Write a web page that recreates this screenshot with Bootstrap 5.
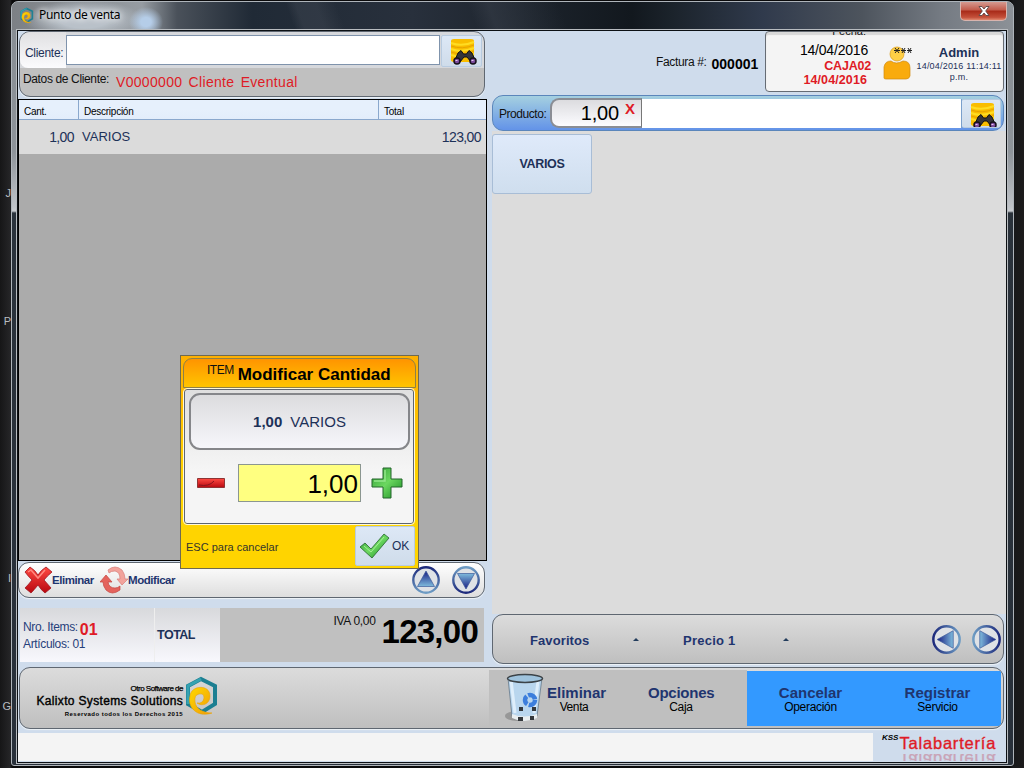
<!DOCTYPE html>
<html lang="es">
<head>
<meta charset="utf-8">
<meta name="viewport" content="width=device-width, initial-scale=1">
<title>Punto de venta</title>
<link href="https://cdn.jsdelivr.net/npm/bootstrap@5.3.0/dist/css/bootstrap.min.css" rel="stylesheet">
<style>
body{width:1024px;height:768px;overflow:hidden;background:linear-gradient(90deg,#161617,#252527 10px,#0a0a0b 12px 1010px,#17181a 1013px,#1c1b1b);font-family:"Liberation Sans",Arial,sans-serif;font-size:12px;line-height:14px;color:#111}
svg{display:block;flex:none}
.desk{width:11px;overflow:hidden;font-size:11px;color:#b9bcc0}
.desk span{display:block;height:14px;text-align:right}
.win{width:1003px;height:765px;margin-top:1px;border:1px solid #aeb4ba;border-radius:7px 7px 3px 3px;background:linear-gradient(180deg,#868c92 0,#8e949a 150px,#bfc3c8 205px,#c9ccd0 209px,#2a323b 211px,#28303a 100%);padding:0 5px}
.titlebar{height:28px;margin:0 -5px;border-radius:6px 6px 0 0;padding-left:8px;background:
 radial-gradient(ellipse 17px 15px at 134px 20px,#b5cde8 30%,#b5cde800),
 radial-gradient(ellipse 60px 20px at 72px 18px,#b9c1c9 40%,#b9c1c900),
 linear-gradient(70deg,#0000 0 28%,#4a515c55 29% 31%,#0000 33% 46%,#39404b88 48%,#0000 55% 80%,#0000),
 linear-gradient(90deg,#7c8085,#969ca2 130px,#4a515a 165px,#202a36 240px,#28303c 400px,#12181e 620px,#1b232b 660px,#303a4c 750px,#4d545d 850px,#757b83 930px,#8c9197)}
.titletxt{font-family:"Noto Sans","Open Sans",sans-serif;font-size:12px;letter-spacing:-.3px;color:#000;text-shadow:0 0 6px #fff,0 0 8px #fff}
.closer{width:47px;height:19px;margin-right:6px;border:1px solid #d8b4ae;border-top:0;border-radius:0 0 5px 5px;background:linear-gradient(#d59a90,#c25a4a 45%,#a82a18 50%,#c4503a 85%,#e08a70)}
.client{width:990px;height:733px;border:1px solid #0c1014;outline:1px solid #b8bcc0;background:#cfdcec}
.left{width:469px}
.right{width:514px;margin-left:5px}
.navy{color:#1d3158}
.blue{color:#1f356f}
.red{color:#df1b26}
.panel{border:1px solid #5f6771;border-radius:11px;background:linear-gradient(#dcdcdc,#bfbfbf);overflow:hidden;box-shadow:0 1px 1px #eef3f8}
.clipanel{height:66px;width:466px;margin:0 0 0 1px;background:linear-gradient(#d6d8dc 0 36px,#c0c0c0 36px)}
.clilabel{width:46px;height:36px;padding:14px 0 0 5px;background:linear-gradient(#e0e0e2,#fbfbfd);border-radius:8px 0 0 8px;letter-spacing:-.3px}
.field{background:#fff;border:1px solid #7f93ac}
.findbtn{background:linear-gradient(#dde8f6,#cfdcea);border:1px solid #b8cbe0;border-radius:2px}
.datagrid{height:462px;margin-top:2px;border:1px solid #000;background:#ababab}
.ghead{height:20px;background:linear-gradient(#e6f0fc 50%,#e2edfb);border-bottom:1px solid #8aa8cd;font-size:10px;line-height:23px;letter-spacing:-.25px;color:#000}
.ghead div{border-right:1px solid #8aa8cd;padding-left:5px}
.ghead div:last-child{border-right:0}
.grow{height:34px;background:#dbdbdb;font-size:14px;line-height:34px}
.tools{height:36px;width:467px;margin:1px 0 0;background:linear-gradient(#fff,#dedede)}
.tools b{font-size:11.5px;letter-spacing:-.45px}
.totals{height:54px;width:464px;margin:10px 0 0 2px;color:#26407a}
.soft{background:linear-gradient(#d8d9dc,#f8f8fd)}
.foot{height:62px;width:985px;margin:2px 0 0 1px}
.status{height:28px;margin-top:4px}
.userbox{width:239px;height:61px;margin:0 2px 0 0;border:1px solid #666c74;border-radius:4px;background:#f4f4f4;box-shadow:inset 0 3px 1px #d8d8d8;overflow:hidden}
.prodbar{width:512px;height:36px;flex:none;border:1px solid #5b86bb;border-radius:11px;background:linear-gradient(#a5d0e0,#6393e8);overflow:hidden}
.qty{width:92px;height:30px;margin-top:2px;border:2px solid #8a8d94;border-right:1px solid #777;border-radius:9px 0 0 9px;background:linear-gradient(#dcdcdf,#fcfcff)}
.items{height:483px;background:#dcdcdc;padding-top:3px}
.tile{width:100px;height:60px;border:1px solid #a8bdd6;border-radius:3px;background:linear-gradient(#dfeafa,#cfdeee);font-size:12.5px;letter-spacing:-.35px}
.favs{height:50px;width:512px;background:linear-gradient(#dcdcdc,#bfbfbf)}
.fnbtn{height:55px;text-align:center}
.fnbtn b{display:block;font-size:15px;line-height:17px}
.dialog{position:absolute;left:180px;top:355px;width:239px;height:214px;border:1px solid #6f6a50;background:linear-gradient(#ffb000,#ffd400 60%);z-index:5}
.dhead{height:30px;margin:2px 2px 0;border:1px solid #8f8046;border-radius:9px 9px 0 0;background:linear-gradient(#ff9400,#ffc400)}
.dbody{height:135px;margin:1px 4px 0 3px;border:1px solid #5c6470;outline:1px solid #fff8d8;border-radius:3px;background:linear-gradient(#dfdfdf,#f5f5f5 60%)}
.ditem{height:57px;margin:3px 3px 0 4px;border:2px solid #85868a;border-radius:11px;background:linear-gradient(#dcdcde,#f6f6fb);font-size:15px}
.mirror{height:7px;overflow:hidden;color:#c9a3b6}
.mirror span{display:block;transform:scaleY(-1);line-height:18px;height:18px;margin-top:-3px}
</style>
</head>
<body class="d-flex">
<svg width="0" height="0" class="position-absolute">
 <defs>
  <linearGradient id="ring" x1="0" y1="0" x2="1" y2="0"><stop offset="0" stop-color="#1d2a7c"/><stop offset="1" stop-color="#6e9cc4"/></linearGradient>
  <linearGradient id="tri" x1="0" y1="0" x2="1" y2="0"><stop offset="0" stop-color="#161c82"/><stop offset="1" stop-color="#7fbbdc"/></linearGradient>
  <linearGradient id="grn" x1="0" y1="0" x2="1" y2="1"><stop offset="0" stop-color="#2f9a35"/><stop offset=".5" stop-color="#6cd860"/><stop offset="1" stop-color="#178a20"/></linearGradient>
  <linearGradient id="gld" x1="0" y1="0" x2="1" y2="1"><stop offset="0" stop-color="#ffd900"/><stop offset="1" stop-color="#f09c08"/></linearGradient>
  <linearGradient id="rd" x1="0" y1="0" x2="0" y2="1"><stop offset="0" stop-color="#ff4a42"/><stop offset="1" stop-color="#b80810"/></linearGradient>
  <symbol id="arrow" viewBox="0 0 28 28">
   <circle cx="14" cy="14" r="12.700" fill="#dfe2e6" stroke="url(#ring)" stroke-width="2.400"/>
   <path d="M5 14 20.500 5.500V22.500Z" fill="url(#tri)" stroke="#3c5a9a" stroke-width=".7"/>
  </symbol>
  <symbol id="finder" viewBox="0 0 28 27">
   <path d="M2 3Q2 1 5 1H22Q25 1 25 3V20Q25 24 21 24H5Q1 24 2 20Z" fill="#f9bd00"/>
   <path d="M2 5Q13 9 25 4M2 11Q13 15 25 10M2 17Q12 20 25 16" stroke="#ffdc22" stroke-width="2" fill="none"/>
   <path d="M2 8Q13 12 25 7M2 14Q13 18 25 13" stroke="#e8a400" stroke-width="1" fill="none"/>
   <path d="M6 22 9 15 12 12.500 14.500 16 17.500 16 20 12.500 23 15 26 22 22 24 18 19H15L11 24Z" fill="#35343a" stroke="#111"/>
   <circle cx="8" cy="23" r="3" fill="#7b4b9c" stroke="#17101c" stroke-width="1.500"/><circle cx="24" cy="23" r="3" fill="#7b4b9c" stroke="#17101c" stroke-width="1.500"/>
   <path d="M6.500 22.500h2M22.500 22.500h2" stroke="#e6c8f3"/>
  </symbol>
  <symbol id="logo" viewBox="0 0 34 40">
   <path d="M16 3 30 10V28L17 36 3 28V10Z" fill="none" stroke="#1c7f92" stroke-width="4"/>
   <path d="M16 3 3 10V28" fill="none" stroke="#35a3b2" stroke-width="3"/>
   <path d="M5 20C6 9 25 8 25 20C25 28 17 31 12 27Q18 28 19 22Q19 17 14 18Q9 19 10 26C11 33 18 37 27 37C12 42 2 31 5 20Z" fill="url(#gld)" stroke="#e9a50a" stroke-width=".6"/>
  </symbol>
 </defs>
</svg>

<div class="desk">
 <span style="margin-top:186px">J</span><span style="margin-top:114px">P</span><span style="margin-top:243px">I</span><span style="margin-top:114px">G</span>
</div>

<main class="win">
 <header class="titlebar d-flex">
  <svg width="14" height="17" viewBox="0 0 34 40" style="margin-top:5px"><use href="#logo"/></svg>
  <div class="titletxt" style="padding:6px 0 0 5px">Punto de venta</div>
  <button class="closer ms-auto p-0 d-flex justify-content-center align-items-center" aria-label="Cerrar">
   <svg width="14" height="12" viewBox="0 0 14 12"><path d="M2 1.500H5L7 4 9 1.500H12L8.700 6 12 10.500H9L7 8 5 10.500H2L5.300 6Z" fill="#fff" stroke="#5b4545" stroke-width=".9"/></svg>
  </button>
 </header>

 <div class="client">
  <div class="d-flex" style="height:634px">
   <section class="left d-flex flex-column">
    <div class="panel clipanel">
     <div class="d-flex">
      <label class="clilabel navy">Cliente:</label>
      <div class="field" style="width:374px;height:30px;margin-top:3px"></div>
      <button class="findbtn p-0" style="width:41px;height:32px;margin:3px 0 0 1px"><svg width="28" height="27" style="margin-left:7px"><use href="#finder"/></svg></button>
     </div>
     <div class="d-flex text-nowrap">
      <span style="padding:4px 0 0 3px;width:96px;letter-spacing:-.36px">Datos de Cliente:</span>
      <span class="red" style="font-size:14px;padding-top:7px;letter-spacing:.32px;word-spacing:2px">V0000000 Cliente Eventual</span>
     </div>
    </div>

    <div class="datagrid">
     <div class="ghead d-flex"><div style="width:60px">Cant.</div><div style="width:300px">Descripción</div><div style="width:107px">Total</div></div>
     <div class="grow d-flex navy"><div class="text-end" style="width:55px;letter-spacing:-.6px">1,00</div><div style="padding-left:8px;font-size:13px">VARIOS</div><div class="ms-auto" style="padding-right:5px;letter-spacing:-.6px">123,00</div></div>
    </div>

    <div class="panel tools d-flex align-items-center blue">
     <svg width="28" height="28" viewBox="0 0 28 28" style="margin-left:5px"><path d="M1 6 6 1Q11 4 14 9 17 4 22 1L28 6Q23 10 20 14L27 22 21 27Q17 24 14 19 10 24 7 27L1 22Q5 18 8 14 4 10 1 6Z" fill="url(#rd)" stroke="#a01520" stroke-width=".8"/><path d="M4 6 7 4 14 12 21 4" stroke="#ff8a80" stroke-width="1.500" fill="none"/></svg>
     <b style="width:48px">Eliminar</b>
     <svg width="28" height="30" viewBox="0 0 28 30"><path d="M8 5Q15-1 22 5Q25 9 25 14H28L22 20 17 14H20Q20 7 15 6Q11 6 9 8Z" fill="#f2a39c" stroke="#d97d78" stroke-width=".7"/><path d="M20 25Q12 31 6 25Q3 21 3 17H0L6 10 12 17H8Q9 23 15 23Q18 23 20 21Z" fill="#e4635d" stroke="#c4453f" stroke-width=".7"/></svg>
     <b>Modificar</b>
     <svg class="ms-auto" width="28" height="28" style="transform:rotate(90deg)"><use href="#arrow"/></svg>
     <svg width="28" height="28" style="transform:rotate(-90deg);margin:0 4px 0 12px"><use href="#arrow"/></svg>
    </div>

    <div class="totals d-flex">
     <div class="soft text-nowrap" style="width:134px;padding:10px 0 0 3px;line-height:18px;letter-spacing:-.35px">
      <div class="d-flex" style="height:17px"><span>Nro. Items:</span><b class="red" style="font-size:16px;line-height:24px;margin-left:2px;letter-spacing:0">01</b></div>
      <div>Artículos: 01</div>
     </div>
     <div class="soft navy d-flex align-items-center" style="width:66px;padding-left:2px;font-size:12.5px;letter-spacing:-.5px;font-weight:700;border-left:1px solid #eee"><span>TOTAL</span></div>
     <div class="flex-fill d-flex justify-content-end" style="background:#c0c0c0;padding-right:6px;color:#111">
      <span style="padding:6px 6px 0 0;letter-spacing:-.3px">IVA 0,00</span>
      <b style="font-size:33px;line-height:48px;color:#000;letter-spacing:-.75px">123,00</b>
     </div>
    </div>
   </section>

   <section class="right d-flex flex-column">
    <div class="d-flex" style="height:64px">
     <div class="d-flex text-nowrap" style="margin-left:164px;padding-top:24px"><span style="letter-spacing:-.35px">Factura #:</span><b style="font-size:14px;margin:2px 0 0 5px;color:#000">000001</b></div>
     <div class="userbox ms-auto d-flex">
      <div class="text-end" style="width:104px;line-height:15px;font-size:13px">
       <div style="height:4px;overflow:hidden;font-size:11px;padding-right:4px"><div style="margin-top:-8px">Fecha:</div></div>
       <div style="padding:7px 2px 0 0;font-size:14px;letter-spacing:-.2px;color:#000">14/04/2016</div>
       <b class="red d-block" style="font-size:12.500px;letter-spacing:-.2px;line-height:16px;margin-right:-1px">CAJA02</b><b class="red d-block" style="font-size:12.500px;line-height:12px;padding-right:3px;letter-spacing:.1px">14/04/2016</b>
      </div>
      <svg width="30" height="35" viewBox="0 0 30 35" style="margin:13px 0 0 13px"><circle cx="14" cy="9" r="7" fill="#ffcf45" stroke="#d99b18" stroke-width=".7"/><path d="M1 33V22Q2 16 8 16Q13 20 20 16Q27 16 27 23V31Q26 34 23 34H3Q1 34 1 33Z" fill="#f9ab0d" stroke="#d08a10" stroke-width=".7"/><path d="M11 5.500h6M12 3l4 5M16 3l-4 5M18 5.500h5M19 3l3 5M22 3l-3 5M24 5.500h5M25 3l3 5M28 3l-3 5" stroke="#222" stroke-width="1"/></svg>
      <div class="navy text-center flex-fill text-nowrap" style="font-size:9px;line-height:11px;padding:13px 0 0 2px"><b class="d-block" style="font-size:13px;line-height:16px">Admin</b><span style="letter-spacing:.2px">14/04/2016 11:14:11<br>p.m.</span></div>
     </div>
    </div>

    <div class="prodbar d-flex">
     <label style="width:57px;padding:11px 0 0 6px;letter-spacing:-.45px">Producto:</label>
     <div class="qty d-flex justify-content-end"><span style="font-size:20px;line-height:27px;color:#000;letter-spacing:-.2px">1,00</span><b class="red" style="font-size:15px;line-height:18px;padding:0 6px 0 6px">X</b></div>
     <div style="width:320px;height:29px;margin-top:3px;background:#fff;border-right:1px solid #7ba0cc"></div>
     <button class="findbtn p-0 flex-fill overflow-hidden" style="height:29px;margin:3px 2px 0 0;border-left:0"><svg width="28" height="27" style="margin:2px 0 0 7px"><use href="#finder"/></svg></button>
    </div>

    <div class="items"><button class="tile fw-bold navy p-0">VARIOS</button></div>

    <div class="panel favs d-flex align-items-center blue fw-bold" style="font-size:13px;letter-spacing:.1px">
     <span style="width:103px;padding-left:37px;white-space:nowrap;padding-top:3px">Favoritos</span>
     <svg width="6" height="3" style="margin-left:37px"><path d="M0 3 3 0 6 3Z" fill="#223c5c"/></svg>
     <span style="margin-left:44px;width:106px;padding-top:3px;letter-spacing:.25px">Precio 1</span>
     <svg width="6" height="3" style="margin-left:-6px"><path d="M0 3 3 0 6 3Z" fill="#223c5c"/></svg>
     <svg class="ms-auto" width="29" height="29"><use href="#arrow"/></svg>
     <svg width="29" height="29" style="transform:rotate(180deg);margin:0 2px 0 11px"><use href="#arrow"/></svg>
    </div>
   </section>
  </div>

  <footer class="panel foot d-flex">
   <div class="d-flex" style="width:469px;padding-left:17px">
    <div class="d-flex flex-column align-items-end text-nowrap text-black" style="width:146px;padding-top:15px">
     <div style="font-size:8px;line-height:11px;letter-spacing:-.5px;-webkit-text-stroke:.25px">Otro Software de</div>
     <div style="font-size:12px;line-height:14px;-webkit-text-stroke:.4px;letter-spacing:.34px">Kalixto Systems Solutions</div>
     <b style="font-size:6px;line-height:13px;letter-spacing:.46px">Reservado todos los Derechos 2015</b>
    </div>
    <svg width="34" height="40" style="margin:8px 0 0 2px"><use href="#logo"/></svg>
   </div>
   <div class="d-flex blue" style="width:258px;height:57px;margin-top:2px;background:#bfbfbf">
    <svg width="42" height="50" viewBox="0 0 42 50" style="margin:3px 0 0 15px">
     <ellipse cx="13" cy="43" rx="12" ry="5" fill="#777" opacity=".55"/>
     <path d="M4 5 8 43Q20 50 33 43L38 5Z" fill="#b9d6ee" stroke="#65788a" stroke-width=".8"/>
     <path d="M7 7 11 40M34 8 30 40" stroke="#e8f4ff" stroke-width="3" opacity=".8"/>
     <path d="M8 41Q20 46 33 41V45Q20 51 8 45Z" fill="#e9eef0"/><path d="M14 44h5v4h-5zM26 43h4v4h-4zM15 34h4v4h-4zM28 34h4v4h-4z" fill="#34383c"/>
     <ellipse cx="21" cy="5.500" rx="17.500" ry="4" fill="#9fc3dd" stroke="#3c4348" stroke-width="1.500"/>
     <circle cx="26" cy="27" r="5" fill="none" stroke="#3c7edc" stroke-width="4.500" stroke-dasharray="9 1.500"/>
    </svg>
    <div class="fnbtn" style="width:58px;margin-left:1px;padding-top:14px"><b>Eliminar</b><span class="text-black" style="letter-spacing:-.4px;line-height:12px;display:block;margin-left:-4px">Venta</span></div>
    <div class="fnbtn" style="width:66px;margin-left:43px;padding-top:14px"><b style="letter-spacing:-.25px">Opciones</b><span class="text-black" style="letter-spacing:-.3px;line-height:12px;display:block">Caja</span></div>
   </div>
   <div class="d-flex blue" style="width:254px;height:55px;margin-top:3px;background:#3399ff">
    <div class="fnbtn" style="width:127px;padding-top:13px"><b>Cancelar</b><span class="text-black" style="letter-spacing:-.3px;line-height:12px;display:block">Operación</span></div>
    <div class="fnbtn" style="width:127px;padding-top:13px"><b>Registrar</b><span class="text-black" style="letter-spacing:-.3px;line-height:12px;display:block">Servicio</span></div>
   </div>
  </footer>

  <div class="status d-flex">
   <div style="width:855px;background:#f4f4f4"></div>
   <div class="flex-fill d-flex text-nowrap overflow-hidden" style="padding-left:9px">
    <b class="fst-italic" style="font-size:8px;line-height:9px;color:#000">KSS</b>
    <div class="red" style="font-size:16.5px;line-height:21px;letter-spacing:.8px;margin-left:1px;-webkit-text-stroke:.35px">Talabartería<div class="mirror" aria-hidden="true"><span>Talabartería</span></div></div>
   </div>
  </div>
 </div>
</main>

<div class="dialog">
 <div class="dhead d-flex text-nowrap" style="padding-left:23px"><span style="padding-top:4px;letter-spacing:-.5px">ITEM</span><b style="font-size:17px;line-height:32px;color:#000;padding-left:4px;letter-spacing:0">Modificar Cantidad</b></div>
 <div class="dbody">
  <div class="ditem navy d-flex justify-content-center align-items-center"><b>1,00</b><span class="ms-2">VARIOS</span></div>
  <div class="d-flex align-items-center" style="margin-top:14px">
   <svg width="28" height="10" style="margin-left:12px"><path d="M.5.500H27.500V9.500H.5Z" fill="url(#rd)" stroke="#8e3434"/><path d="M2 7Q12 9 17 3" stroke="#86141c" fill="none"/></svg>
   <div class="text-end text-black" style="width:123px;height:38px;margin-left:13px;border:1px solid #8b9690;background:#ffff80;font-size:26px;line-height:39px;padding-right:2px">1,00</div>
   <svg width="32" height="32" viewBox="0 0 32 32" style="margin-left:10px"><path d="M12 1H20V12H31V20H20V31H12V20H1V12H12Z" fill="url(#grn)" stroke="#23642a"/><path d="M14 3V14H3" fill="none" stroke="#93e68a" stroke-width="1.500"/></svg>
  </div>
 </div>
 <div class="d-flex" style="margin-top:2px"><span style="padding:14px 0 0 5px;width:174px;font-size:11px;color:#33342c">ESC para cancelar</span>
  <button class="findbtn p-0 d-flex align-items-center navy" style="width:60px;height:40px"><svg width="31" height="26" viewBox="0 0 31 26" style="margin-left:3px"><path d="M1 14 6 10 12 16 25 1 30 5 13 25Z" fill="url(#grn)" stroke="#23642a" stroke-width=".8"/><path d="M5 13 12 19 25 4" stroke="#a5f095" fill="none"/></svg><span style="margin-left:2px">OK</span></button></div>
</div>
<script src="https://cdn.jsdelivr.net/npm/bootstrap@5.3.0/dist/js/bootstrap.bundle.min.js"></script>
</body>
</html>
